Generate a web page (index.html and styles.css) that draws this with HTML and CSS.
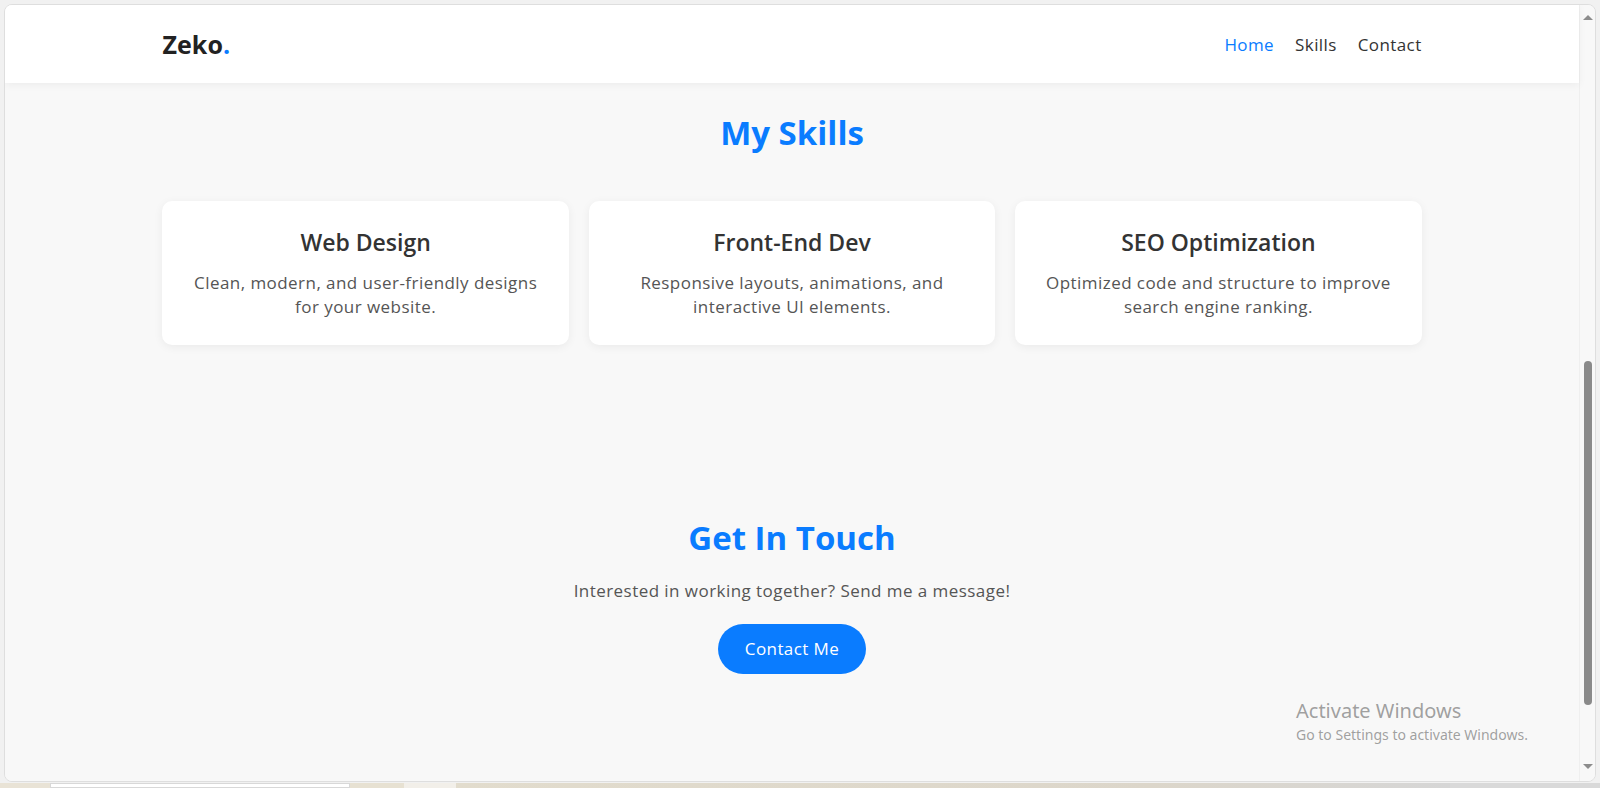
FILE: index.html
```html
<!DOCTYPE html>
<html lang="en">
<head>
<meta charset="utf-8">
<title>Zeko. Portfolio</title>
<link rel="stylesheet" href="styles.css">
</head>
<body>
<div class="desktop">
  <div class="window">
    <div class="page">
      <header class="site-header">
        <div class="header-inner">
          <div class="logo">Zeko<span class="dot">.</span></div>
          <nav class="nav">
            <a class="nav-link active" href="#home">Home</a>
            <a class="nav-link" href="#skills">Skills</a>
            <a class="nav-link" href="#contact">Contact</a>
          </nav>
        </div>
      </header>
      <section class="skills" id="skills">
        <h2 class="section-title">My Skills</h2>
        <div class="skill-grid">
          <div class="card">
            <h3 class="card-title">Web Design</h3>
            <p class="card-text">Clean, modern, and user-friendly designs for your website.</p>
          </div>
          <div class="card">
            <h3 class="card-title">Front-End Dev</h3>
            <p class="card-text">Responsive layouts, animations, and interactive UI elements.</p>
          </div>
          <div class="card">
            <h3 class="card-title">SEO Optimization</h3>
            <p class="card-text">Optimized code and structure to improve search engine ranking.</p>
          </div>
        </div>
      </section>
      <section class="contact" id="contact">
        <h2 class="section-title">Get In Touch</h2>
        <p class="contact-text">Interested in working together? Send me a message!</p>
        <a class="btn" href="#contact">Contact Me</a>
      </section>
      <div class="activate">
        <div class="activate-title">Activate Windows</div>
        <div class="activate-sub">Go to Settings to activate Windows.</div>
      </div>
    </div>
    <div class="scrollbar">
      <div class="arrow up"></div>
      <div class="track"><div class="thumb"></div></div>
      <div class="arrow down"></div>
    </div>
  </div>
  <div class="taskbar">
    <div class="tb tb1"></div>
    <div class="tb tb2"></div>
    <div class="tb tb3"></div>
    <div class="tb tb4"></div>
    <div class="tb tb5"></div>
    <div class="tb tb6"></div>
  </div>
</div>
</body>
</html>
```

FILE: styles.css
```css
* { box-sizing: border-box; margin: 0; padding: 0; }
html, body { width: 1600px; height: 788px; overflow: hidden; }
body {
  background: #f1f1f1;
  font-family: "Open Sans", "Noto Sans", sans-serif;
  color: #333;
}
.desktop {
  width: 1600px;
  height: 788px;
  display: flex;
  flex-direction: column;
  padding: 4px 4px 0 4px;
}
.window {
  height: 778px;
  display: flex;
  border: 1px solid #dedede;
  border-radius: 8px;
  overflow: hidden;
  background: #f8f8f8;
}
.page {
  flex: 1;
  position: relative;
  background: #f8f8f8;
}
.site-header {
  background: #fff;
  height: 78px;
  box-shadow: 0 2px 8px rgba(0,0,0,0.05);
  display: flex;
  align-items: center;
}
.header-inner {
  width: 80%;
  margin: 0 auto;
  display: flex;
  align-items: center;
  justify-content: space-between;
}
.logo {
  font-size: 25px;
  font-weight: 700;
  color: #222;
  letter-spacing: 0.1px;
}
.logo .dot { color: #0a7cff; }
.nav { display: flex; gap: 21px; }
.nav-link {
  text-decoration: none;
  font-size: 17px;
  letter-spacing: 0.4px;
  color: #333;
}
.nav-link.active { color: #0a7cff; }
.skills { padding-top: 28px; }
.section-title {
  text-align: center;
  color: #0a7cff;
  font-size: 33px;
  line-height: 44px;
  font-weight: 700;
}
.skill-grid {
  width: 80%;
  margin: 46px auto 0;
  display: grid;
  grid-template-columns: repeat(3, 1fr);
  gap: 20px;
}
.card {
  background: #fff;
  border-radius: 10px;
  box-shadow: 0 2px 10px rgba(0,0,0,0.06);
  padding: 26px 24px 26px;
  text-align: center;
  height: 144px;
}
.card-title {
  font-size: 23px;
  line-height: 30px;
  font-weight: 600;
  color: #333;
}
.card-text {
  margin-top: 14px;
  font-size: 17px;
  letter-spacing: 0.45px;
  line-height: 24px;
  color: #555;
}
.contact {
  margin-top: 171px;
  text-align: center;
}
.contact-text {
  margin-top: 19px;
  font-size: 17px;
  letter-spacing: 0.45px;
  line-height: 24px;
  color: #555;
}
.btn {
  display: inline-block;
  margin-top: 21px;
  background: #0a7cff;
  color: #fff;
  text-decoration: none;
  font-size: 17px;
  letter-spacing: 0.4px;
  line-height: 26px;
  padding: 12px 27px;
  border-radius: 25px;
}
.activate {
  position: absolute;
  left: 1291px;
  top: 693px;
  font-family: "Noto Sans", "Open Sans", sans-serif;
  color: rgba(120,120,120,0.7);
}
.activate-title { font-size: 20px; line-height: 26px; }
.activate-sub { font-size: 14px; line-height: 20px; margin-top: 1px; }
.scrollbar {
  width: 16px;
  background: #f8f8f8;
  border-left: 1px solid #efefef;
  display: flex;
  flex-direction: column;
  align-items: center;
}
.arrow { width: 0; height: 0; border-left: 5px solid transparent; border-right: 5px solid transparent; }
.arrow.up { border-bottom: 5px solid #8c8c8c; margin-top: 10px; }
.arrow.down { border-top: 5px solid #8c8c8c; margin-bottom: 12px; }
.track { flex: 1; width: 100%; display: flex; justify-content: center; }
.thumb {
  width: 8px;
  height: 344px;
  margin-top: 341px;
  background: #8a8a8a;
  border-radius: 4px;
}
.taskbar {
  flex: 1;
  display: flex;
  margin: 0 -4px;
  margin-top: 1px;
}
.tb { height: 100%; }
.tb1 { width: 50px; background: #e9e3d6; }
.tb2 { width: 300px; background: #ffffff; border: 1px solid #d8d8d8; }
.tb3 { width: 54px; background: #e7e1d2; }
.tb4 { width: 52px; background: #f2efe9; }
.tb5 { flex: 1; background: linear-gradient(90deg, #e2dccd, #dcd6ca 70%, #d6d6d6); }
.tb6 { width: 150px; background: #d9d9d9; }
```
